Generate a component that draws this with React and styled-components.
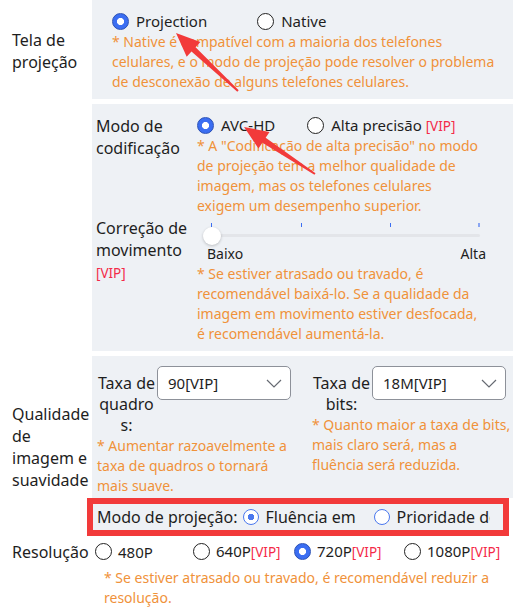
import React from 'react'
import styled, { createGlobalStyle, css } from 'styled-components'

const c = {
  text: '#1e1e1e',
  note: '#f0923a',
  vip: '#f42a48',
  panel: '#eef1f5',
  blue: '#3b6ef2',
  red: '#f23a3a',
}

const GlobalStyle = createGlobalStyle`
  body {
    margin: 0;
    background: #fff;
  }
  * {
    box-sizing: border-box;
  }
`

// arrow polygon from tip to tail
const arrowPoints = (tip, tail) => {
  const dx = tail[0] - tip[0]
  const dy = tail[1] - tip[1]
  const len = Math.hypot(dx, dy)
  const ux = dx / len
  const uy = dy / len
  const px = -uy
  const py = ux
  const L = 24
  const W = 10
  const bx = tip[0] + ux * L
  const by = tip[1] + uy * L
  const pts = [
    tip,
    [bx + px * W, by + py * W],
    [bx + px * 3, by + py * 3],
    [tail[0] + px * 1, tail[1] + py * 1],
    [tail[0] - px * 1, tail[1] - py * 1],
    [bx - px * 3, by - py * 3],
    [bx - px * W, by - py * W],
  ]
  return pts.map(p => p.join(',')).join(' ')
}

const App = () => {
  return (
    <Page>
      <GlobalStyle />

      <Section>
        <SideLabel top={3}>Tela de projeção</SideLabel>
        <Panel pad='10px 10px 7px 20px'>
          <RadioGroup gap={50}>
            <Option>
              <Radio checked />
              <span>Projection</span>
            </Option>
            <Option>
              <Radio />
              <span>Native</span>
            </Option>
          </RadioGroup>
          <Note>
            * Native é compatível com a maioria dos telefones celulares, e o
            modo de projeção pode resolver o problema de desconexão de alguns
            telefones celulares.
          </Note>
        </Panel>
      </Section>

      <Section>
        <div />
        <Panel pad='10px 33px 7px 4px'>
          <SettingGrid>
            <RowLabel>Modo de codificação</RowLabel>
            <div>
              <RadioGroup gap={32}>
                <Option>
                  <Radio checked />
                  <span>AVC-HD</span>
                </Option>
                <Option>
                  <Radio />
                  <span>
                    Alta precisão <Vip>[VIP]</Vip>
                  </span>
                </Option>
              </RadioGroup>
              <Note>
                * A "Codificação de alta precisão" no modo de projeção tem a
                melhor qualidade de imagem, mas os telefones celulares exigem
                um desempenho superior.
              </Note>
            </div>

            <RowLabel>
              Correção de movimento <Vip>[VIP]</Vip>
            </RowLabel>
            <div>
              <SliderBox>
                <Track />
                {[0, 33.33, 66.66, 100].map((p, i) => (
                  <Tick key={p} style={{ left: `${p}%` }} last={i === 3} />
                ))}
                <Knob />
              </SliderBox>
              <ScaleLabels>
                <span>Baixo</span>
                <span>Alta</span>
              </ScaleLabels>
              <Note>
                * Se estiver atrasado ou travado, é recomendável baixá-lo. Se a
                qualidade da imagem em movimento estiver desfocada, é
                recomendável aumentá-la.
              </Note>
            </div>
          </SettingGrid>
        </Panel>
      </Section>

      <Section>
        <SideLabel top={8}>Qualidade de imagem e suavidade</SideLabel>
        <div>
          <Panel pad='10px 1px 2px 5px'>
            <TwoCols>
              <div>
                <Field>
                  <FieldLabel>Taxa de quadros:</FieldLabel>
                  <Select>
                    90[VIP]
                    <Chevron />
                  </Select>
                </Field>
                <Note>
                  * Aumentar razoavelmente a taxa de quadros o tornará mais
                  suave.
                </Note>
              </div>
              <div>
                <Field>
                  <FieldLabel>Taxa de bits:</FieldLabel>
                  <Select>
                    18M[VIP]
                    <Chevron />
                  </Select>
                </Field>
                <Note>
                  * Quanto maior a taxa de bits, mais claro será, mas a
                  fluência será reduzida.
                </Note>
              </div>
            </TwoCols>
          </Panel>
          <ProjRow>
            <ProjLabel>Modo de projeção:</ProjLabel>
            <ProjOptions>
              <ProjOption>
                <Ring checked />
                <ProjText width={100}>Fluência em primeiro lugar</ProjText>
              </ProjOption>
              <ProjOption>
                <Ring />
                <ProjText nowrap>Prioridade de qualidade</ProjText>
              </ProjOption>
            </ProjOptions>
          </ProjRow>
        </div>
      </Section>

      <ResRow>
        <SideLabel>Resolução</SideLabel>
        <ResOptions>
          <Option tight>
            <Radio />
            <span>480P</span>
          </Option>
          <Option tight>
            <Radio />
            <span>
              640P<Vip>[VIP]</Vip>
            </span>
          </Option>
          <Option tight>
            <Radio checked />
            <span>
              720P<Vip>[VIP]</Vip>
            </span>
          </Option>
          <Option tight>
            <Radio />
            <span>
              1080P<Vip>[VIP]</Vip>
            </span>
          </Option>
        </ResOptions>
      </ResRow>
      <ResNote>
        * Se estiver atrasado ou travado, é recomendável reduzir a resolução.
      </ResNote>

      <Overlay viewBox='0 0 513 615'>
        <polygon points={arrowPoints([176, 33], [238, 91])} fill={c.red} />
        <polygon points={arrowPoints([244, 127], [315, 174])} fill={c.red} />
      </Overlay>
    </Page>
  )
}

export default App

const Chevron = () => (
  <svg width='16' height='9' viewBox='0 0 16 9'>
    <polyline
      points='1,1 8,8 15,1'
      fill='none'
      stroke='#666a72'
      strokeWidth='1.2'
    />
  </svg>
)

const Page = styled.div`
  position: relative;
  width: 513px;
  min-height: 615px;
  overflow: hidden;
  font-family: 'Noto Sans', 'Open Sans', sans-serif;
  font-size: 15px;
  color: ${c.text};
`

const Section = styled.div`
  display: grid;
  grid-template-columns: 92px minmax(0, 1fr);
  margin-bottom: 5px;
`

const SideLabel = styled.div`
  align-self: center;
  padding-left: 12px;
  padding-top: ${p => p.top || 0}px;
  font-size: 16px;
  line-height: 22px;
`

const Panel = styled.div`
  background: ${c.panel};
  padding: ${p => p.pad};
`

const RadioGroup = styled.div`
  display: flex;
  align-items: center;
  height: 22px;
  gap: ${p => p.gap}px;
`

const Option = styled.label`
  display: inline-flex;
  align-items: center;
  gap: ${p => (p.tight ? 6 : 7)}px;
  white-space: nowrap;
  line-height: 22px;
`

const Radio = styled.span`
  flex-shrink: 0;
  width: 17px;
  height: 17px;
  border-radius: 50%;
  background: #fff;
  border: 1px solid #222;
  ${p =>
    p.checked &&
    css`
      border-color: #2a50b5;
      background: radial-gradient(circle, #fff 0 3.3px, ${c.blue} 3.8px);
    `}
`

const Vip = styled.span`
  color: ${c.vip};
  font-size: 13.5px;
`

const Note = styled.div`
  color: ${c.note};
  font-size: 14px;
  line-height: 20px;
`

const SettingGrid = styled.div`
  display: grid;
  grid-template-columns: 101px 1fr;
`

const RowLabel = styled.div`
  font-size: 16px;
  line-height: 22px;
  padding-top: 1px;
`

const SliderBox = styled.div`
  position: relative;
  height: 28px;
  margin: 0 0 0 14px;
`

const Track = styled.div`
  position: absolute;
  top: 18px;
  left: 0;
  right: 0;
  height: 3px;
  border-radius: 2px;
  background: #e3e5e9;
`

const Tick = styled.span`
  position: absolute;
  top: 7px;
  width: ${p => (p.last ? 2 : 1)}px;
  height: 4px;
  margin-left: ${p => (p.last ? -2 : 0)}px;
  background: ${p => (p.last ? '#8aa6f2' : c.blue)};
`

const Knob = styled.span`
  position: absolute;
  left: -8px;
  top: 11px;
  width: 18px;
  height: 18px;
  border-radius: 50%;
  background: #fff;
  box-shadow: 0 1px 3px rgba(0, 0, 0, 0.22);
`

const ScaleLabels = styled.div`
  display: flex;
  justify-content: space-between;
  padding: 0 0 0 10px;
  margin-right: -6px;
  font-size: 14px;
  line-height: 20px;
`

const TwoCols = styled.div`
  display: grid;
  grid-template-columns: 200px 1fr;
  column-gap: 15px;
`

const Field = styled.div`
  display: flex;
  align-items: flex-start;
  gap: 1px;
`

const FieldLabel = styled.div`
  flex-shrink: 0;
  width: 59px;
  padding-top: 7px;
  text-align: center;
  font-size: 16px;
  line-height: 21px;
  overflow-wrap: anywhere;
`

const Select = styled.div`
  width: 134px;
  height: 34px;
  flex-shrink: 0;
  display: flex;
  align-items: center;
  justify-content: space-between;
  padding: 0 8px 0 10px;
  border: 1px solid #8d9199;
  border-radius: 5px;
  background: #fff;
`

const ProjRow = styled.div`
  display: flex;
  align-items: center;
  height: 26px;
  margin: 6px 10px 0 1px;
  padding: 0 13px 0 4px;
  background: ${c.panel};
  outline: 6px solid ${c.red};
  font-size: 16px;
`

const ProjLabel = styled.span`
  white-space: nowrap;
  margin-right: 6px;
`

const ProjOptions = styled.div`
  flex: 1;
  min-width: 0;
  overflow: hidden;
  display: flex;
  align-items: center;
  gap: 9px;
`

const ProjOption = styled.div`
  display: flex;
  align-items: center;
  gap: 6px;
  flex-shrink: 0;
`

const Ring = styled.span`
  width: 16px;
  height: 16px;
  flex-shrink: 0;
  border-radius: 50%;
  border: 1.5px solid #4a78ee;
  background: ${p =>
    p.checked ? 'radial-gradient(circle, #4a78ee 0 3px, #fff 3.5px)' : '#fff'};
`

const ProjText = styled.span`
  ${p => p.width && `width: ${p.width}px;`}
  height: 22px;
  line-height: 22px;
  overflow: hidden;
  white-space: ${p => (p.nowrap ? 'nowrap' : 'normal')};
`

const ResRow = styled.div`
  display: grid;
  grid-template-columns: 92px 1fr;
  margin-top: 10px;
`

const ResOptions = styled.div`
  display: grid;
  grid-template-columns: 98px 101px 110px auto;
  align-items: center;
  padding-left: 3px;
`

const ResNote = styled(Note)`
  padding-left: 104px;
  margin-top: 5px;
`

const Overlay = styled.svg`
  position: absolute;
  top: 0;
  left: 0;
  width: 513px;
  height: 615px;
  pointer-events: none;
`
